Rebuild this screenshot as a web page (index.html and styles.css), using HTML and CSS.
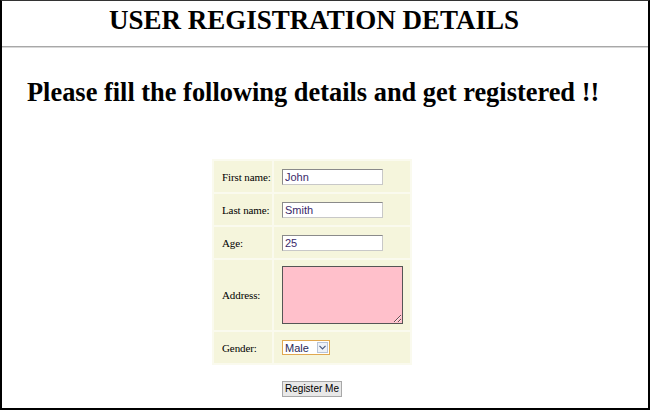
FILE: index.html
```html
<!DOCTYPE html>
<html>
<head>
<meta charset="utf-8">
<link rel="stylesheet" href="styles.css">
</head>
<body>
<div class="frame">
  <h1 class="title">USER REGISTRATION DETAILS</h1>
  <div class="rule"></div>
  <h2 class="lead">Please fill the following details and get registered !!</h2>
  <div class="content">
    <table class="form-table">
      <tr>
        <td class="label">First name:</td>
        <td class="field"><input class="text" type="text" value="John"></td>
      </tr>
      <tr>
        <td class="label">Last name:</td>
        <td class="field"><input class="text" type="text" value="Smith"></td>
      </tr>
      <tr>
        <td class="label">Age:</td>
        <td class="field"><input class="text" type="text" value="25"></td>
      </tr>
      <tr class="tall">
        <td class="label">Address:</td>
        <td class="field"><textarea class="area"></textarea></td>
      </tr>
      <tr>
        <td class="label">Gender:</td>
        <td class="field">
          <div class="select"><span class="select-value">Male</span><span class="select-btn"><svg width="7" height="5" viewBox="0 0 7 5"><path d="M0.5 0.8 L3.5 3.8 L6.5 0.8" fill="none" stroke="#4a5a80" stroke-width="1.2"/></svg></span></div>
        </td>
      </tr>
    </table>
    <button class="submit" type="button">Register Me</button>
  </div>
</div>
</body>
</html>
```
FILE: styles.css
```css
html, body {
  margin: 0;
  padding: 0;
  background: #fff;
}
.frame {
  width: 650px;
  height: 410px;
  box-sizing: border-box;
  border-left: 2px solid #000;
  border-right: 2px solid #000;
  border-bottom: 2px solid #000;
  border-top: 1px solid #333;
  font-family: "Liberation Serif", "Times New Roman", serif;
  color: #000;
  overflow: hidden;
}
.title {
  margin: 0;
  padding: 3px 22px 0 0;
  height: 42px;
  box-sizing: border-box;
  font-size: 27px;
  font-weight: bold;
  text-align: center;
  line-height: 32px;
}
.rule {
  border-top: 1px solid #a8a8a8;
  border-bottom: 1px solid #d8d8d8;
  margin-top: 3px;
}
.lead {
  margin: 28px 0 0 25px;
  font-size: 26.4px;
  font-weight: bold;
  line-height: 32px;
}
.content {
  padding-right: 26px;
  display: flex;
  flex-direction: column;
  align-items: center;
  margin-top: 51px;
}
.form-table {
  border-spacing: 2px;
  background: #fafaee;
  font-size: 11px;
}
.form-table td {
  background: #f5f5dc;
  height: 31px;
  padding: 0 0 0 8px;
  box-sizing: border-box;
  white-space: nowrap;
}
.form-table .label {
  width: 58px;
  letter-spacing: -0.1px;
}
.form-table .field {
  width: 136px;
}
.form-table .tall td {
  height: 70px;
}
.text {
  display: block;
  width: 101px;
  height: 16px;
  box-sizing: border-box;
  margin: 0;
  padding: 0 2px;
  border: 1px solid #c8c8c8;
  border-top-color: #8a8a8a;
  border-left-color: #8a8a8a;
  font-family: "Liberation Sans", Arial, sans-serif;
  font-size: 11px;
  color: #3a2a6a;
  background: #fff;
}
.area {
  display: block;
  width: 121px;
  height: 58px;
  box-sizing: border-box;
  margin: 0;
  border: 1px solid #555;
  background: #ffc0cb;
  resize: both;
}
.select {
  display: flex;
  align-items: center;
  width: 48px;
  height: 15px;
  box-sizing: border-box;
  border: 1px solid #e0a850;
  background: #fff;
  font-family: "Liberation Sans", Arial, sans-serif;
  font-size: 11px;
  color: #2a2a5a;
}
.select-value {
  flex: 1;
  padding-left: 2px;
}
.select-btn {
  width: 11px;
  height: 11px;
  margin-right: 1px;
  box-sizing: border-box;
  border: 1px solid #b8c4d8;
  background: #eef2f8;
  display: flex;
  align-items: center;
  justify-content: center;
}
.submit {
  margin-top: 16px;
  height: 16px;
  padding: 0 2px;
  border: 1px solid #a8a8a8;
  background: #e8e8e8;
  font-family: "Liberation Sans", Arial, sans-serif;
  font-size: 10px;
  color: #000;
  line-height: 14px;
}
```
